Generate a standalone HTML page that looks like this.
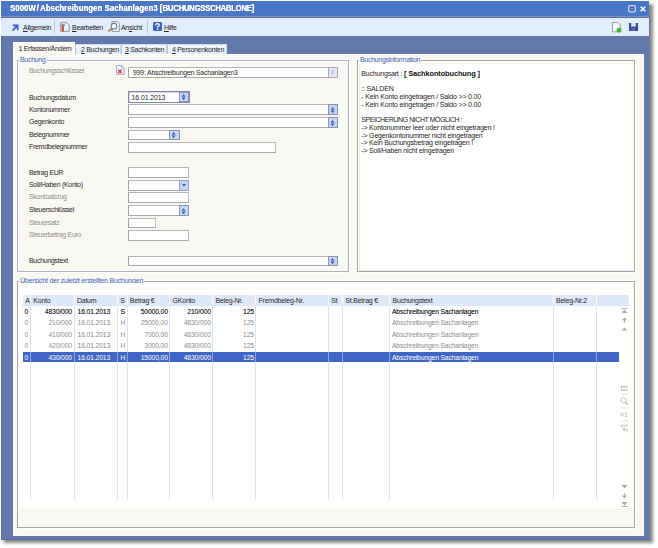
<!DOCTYPE html><html><head><meta charset="utf-8"><style>
*{margin:0;padding:0;box-sizing:border-box}
html,body{width:658px;height:548px;overflow:hidden;background:#fff;font-family:"Liberation Sans",sans-serif;color:#2a2a2a}
div{position:absolute}
.t{white-space:nowrap;font-size:7px;line-height:8px;letter-spacing:-0.3px}
.gb{border:1px solid #a9aeb8;box-shadow:1px 1px 0 #fff, inset 1px 1px 0 #fff}
.gl{font-size:7px;letter-spacing:-0.3px;line-height:8px;color:#4466bb;background:#f9f8f3;padding:0 1px 0 1px;white-space:nowrap}
.lbl{font-size:7px;letter-spacing:-0.3px;line-height:8px;color:#2a2a2a;white-space:nowrap;left:29px}
.dis{color:#8e8e8e}
.inp{background:#fff;border:1px solid #a6a6a8;border-top-color:#b6b6b8;border-right-color:#bdbdbf;border-bottom-color:#a9a9ab;left:128px}
.spin{top:0;right:0;width:10px;height:100%;background:#c7d7f7;border:1px solid #8d9cc2}
.hd{top:295px;height:10.5px;background:#dde8f8;border-right:1px solid #fff}
.ht{font-size:7px;letter-spacing:-0.22px;line-height:8px;color:#2a2a2a;white-space:nowrap}
.vl{top:305px;width:1px;height:195px;background:#dbe4f5}
</style></head><body>
<div style="left:4px;top:4px;width:649px;height:539px;background:#8a8a8a;filter:blur(1.6px)"></div>
<div style="left:1px;top:1px;width:648px;height:539px;background:#6379ab"></div>
<div style="left:649px;top:16px;width:1px;height:524px;background:#6f7aa4"></div>
<div style="left:1px;top:36px;width:1px;height:504px;background:#5c6d9b"></div>
<div style="left:12px;top:54px;width:1px;height:482px;background:#5f7299"></div>
<div style="left:1px;top:539px;width:648px;height:1px;background:#5c6d9b"></div>
<div style="left:1px;top:1px;width:648px;height:14.5px;background:#4a76c6"></div>
<div style="left:1px;top:15.5px;width:648px;height:1px;background:#7890c6"></div>
<div style="left:1px;top:16.5px;width:648px;height:1px;background:#5a70a2"></div>
<div class="t" style="left:9.5px;top:3.4px;font-size:8.7px;font-weight:bold;color:#fff;line-height:10px;letter-spacing:0.15px;transform:scaleX(0.881);transform-origin:0 0;text-shadow:0.25px 0 0 #fff">S000W<span style="margin:0 1.3px 0 1px">/</span>Abschreibungen Sachanlagen3 [<span style="letter-spacing:-0.25px">BUCHUNGSSCHABLONE</span>]</div>
<div style="left:1px;top:17.5px;width:648px;height:18.5px;background:#e1edfb"></div>
<div class="t" style="left:23px;top:23.7px;color:#222"><u>A</u>llgemein</div>
<div class="t" style="left:72px;top:23.7px;color:#222"><u>B</u>earbeiten</div>
<div class="t" style="left:121px;top:23.7px;color:#222">An<u>s</u>icht</div>
<div class="t" style="left:164px;top:23.7px;color:#222"><u>H</u>ilfe</div>
<div style="left:54px;top:20px;width:1px;height:13px;background:#b8c4d8"></div>
<div style="left:147px;top:20px;width:1px;height:13px;background:#b8c4d8"></div>
<svg style="position:absolute;left:10.8px;top:23.8px" width="8" height="8" viewBox="0 0 8 8"><path d="M1.6 6.6 L6 2.2" stroke="#4063b8" stroke-width="1.8" fill="none"/><path d="M1.8 1.4 H6.7 V6.3" stroke="#4063b8" stroke-width="1.6" fill="none"/><path d="M3 1.4 H6.7 V5 Z" fill="#4063b8"/></svg>
<svg style="position:absolute;left:59.5px;top:21.5px" width="10" height="10" viewBox="0 0 10 10"><path d="M0.7 0.7 H6.5 L9.2 3.4 V9.3 H0.7 Z" fill="#eef3fb" stroke="#7d8aa6" stroke-width="0.9"/><path d="M2.8 4 V9.5" stroke="#c8441c" stroke-width="2"/><path d="M1.5 3.5 Q3 2.3 5 3.3" stroke="#555" stroke-width="1.2" fill="none"/></svg>
<svg style="position:absolute;left:107px;top:20.5px" width="13" height="11" viewBox="0 0 13 11"><path d="M5 0.6 H10.5 L12.4 2.5 V10.4 H5 Z" fill="#eef3fb" stroke="#8894ac" stroke-width="0.9"/><circle cx="7" cy="5.2" r="2.8" fill="#fdfdff" stroke="#6e7c98" stroke-width="1.1"/><path d="M4.8 7.5 L1.3 10.2" stroke="#a8884c" stroke-width="1.8"/></svg>
<svg style="position:absolute;left:152.5px;top:22px" width="9" height="9" viewBox="0 0 9 9"><rect x="0" y="0" width="9" height="9" rx="1.2" fill="#3e66c0"/><path d="M2.8 3.2 Q2.8 1.6 4.5 1.6 Q6.3 1.6 6.3 3.1 Q6.3 4.1 4.6 4.8 V5.8" stroke="#fff" stroke-width="1.3" fill="none"/><rect x="3.9" y="6.6" width="1.4" height="1.3" fill="#fff"/></svg>
<svg style="position:absolute;left:612px;top:22px" width="10" height="11" viewBox="0 0 10 11"><path d="M0.5 0.5 H5.8 L8.3 3 V9.8 H0.5 Z" fill="#f4f6fa" stroke="#8a8e98" stroke-width="0.8"/><circle cx="7" cy="8.2" r="2.4" fill="#3fb83a"/></svg>
<svg style="position:absolute;left:629px;top:23px" width="9" height="8" viewBox="0 0 9 8"><rect x="0" y="0" width="9" height="8" fill="#3c4c9c"/><rect x="2.2" y="0" width="4.6" height="3.6" fill="#dde4f2"/><rect x="2.6" y="5" width="3.8" height="3" fill="#5868b0"/></svg>
<svg style="position:absolute;left:627.5px;top:5px" width="8" height="7.5" viewBox="0 0 8 7.5"><rect x="0.5" y="0.5" width="7" height="6.5" rx="1" fill="#87a0dc" stroke="#d6e0f6" stroke-width="0.9"/><path d="M2.3 2.3 H5.7 V5.2 H2.3 Z" fill="none" stroke="#31489a" stroke-width="0.9"/></svg>
<svg style="position:absolute;left:639.5px;top:5.5px" width="6" height="6" viewBox="0 0 6 6"><path d="M0.7 0.7 L5.3 5.3 M5.3 0.7 L0.7 5.3" stroke="#fff" stroke-width="1.5"/></svg>
<div style="left:13px;top:54px;width:631px;height:482px;background:#f9f8f3;border-top:1px solid #fff;border-left:1px solid #fff;border-right:1px solid #fff"></div>
<div style="left:75px;top:43.5px;width:46px;height:10.5px;background:linear-gradient(#f3f8fe,#e4edf9);border:1px solid #d0dae9;border-bottom:none;border-left-color:#b4c0d6"></div>
<div class="t" style="left:81px;top:45.5px"><u>2</u> Buchungen</div>
<div style="left:121px;top:43.5px;width:46px;height:10.5px;background:linear-gradient(#f3f8fe,#e4edf9);border:1px solid #d0dae9;border-bottom:none;border-left-color:#b4c0d6"></div>
<div class="t" style="left:125px;top:45.5px"><u>3</u> Sachkonten</div>
<div style="left:167px;top:43.5px;width:60px;height:10.5px;background:linear-gradient(#f3f8fe,#e4edf9);border:1px solid #d0dae9;border-bottom:none;border-left-color:#b4c0d6"></div>
<div class="t" style="left:172px;top:45.5px"><u>4</u> Personenkonten</div>
<div style="left:13px;top:42px;width:62px;height:13px;background:#f9f8f3;border:1px solid #fff;border-bottom:none"></div>
<div class="t" style="left:18.5px;top:45px">1 Erfassen/Ändern</div>
<div class="gb" style="left:17px;top:60px;width:332px;height:212px;border-color:#b0b2c4"></div>
<div class="gl" style="left:19px;top:55.5px">Buchung</div>
<div class="gb" style="left:357px;top:60px;width:278px;height:212px;background:#fff;border-color:#a2a8aa"></div>
<div style="left:359px;top:63px;width:274px;height:207.5px;border:1px solid #eeeeea;border-top-color:#f4f4f0;border-right-color:#f8f8f6"></div>
<div class="gl" style="left:359px;top:55.5px">Buchungsinformation</div>
<div class="gb" style="left:17px;top:281px;width:618px;height:247px;border-color:#a6a6a6"></div>
<div class="gl" style="left:19px;top:276.5px;letter-spacing:-0.2px">Übersicht der zuletzt erstellten Buchungen</div>
<div class="lbl dis" style="top:67.15px">Buchungsschlüssel</div>
<div class="lbl" style="top:93.75px">Buchungsdatum</div>
<div class="lbl" style="top:105.75px">Kontonummer</div>
<div class="lbl" style="top:118.35px">Gegenkonto</div>
<div class="lbl" style="top:130.75px">Belegnummer</div>
<div class="lbl" style="top:143.45px">Fremdbelegnummer</div>
<div class="lbl" style="top:168.95px">Betrag EUR</div>
<div class="lbl" style="top:181.35px">Soll/Haben (Konto)</div>
<div class="lbl dis" style="top:193.35px">Skontoabzug</div>
<div class="lbl" style="top:206.05px">Steuerschlüssel</div>
<div class="lbl dis" style="top:218.55px">Steuersatz</div>
<div class="lbl dis" style="top:231.05px">Steuerbetrag Euro</div>
<div class="lbl" style="top:256.55px">Buchungstext</div>
<div class="inp" style="top:66.5px;height:11.3px;width:210px"><div class="t" style="left:4px;top:1.6px;color:#262626;font-size:6.8px;letter-spacing:-0.14px">999: Abschreibungen Sachanlagen3</div></div>
<div style="left:327.5px;top:66.5px;width:10.5px;height:11.3px;background:#e3e9f7;border:1px solid #9ea6bc"></div>
<svg style="position:absolute;left:329.6px;top:69.35000000000001px" width="5.2" height="6.3" viewBox="0 0 5 7"><path d="M2.5 0 L5 3.5 L2.5 7 L0 3.5 Z" fill="#d0daf2"/><path d="M2.5 0.2 L4.4 2.7 H0.6 Z" fill="#b8c4e4"/><path d="M2.5 6.8 L4.4 4.3 H0.6 Z" fill="#b8c4e4"/></svg>
<svg style="position:absolute;left:116px;top:65.3px" width="9" height="10" viewBox="0 0 9 10"><path d="M0.6 0.6 H5.6 L8.2 3.2 V9.3 H0.6 Z" fill="#f2f5fb" stroke="#8ea0c8" stroke-width="0.9"/><path d="M5.6 0.6 V3.2 H8.2" fill="none" stroke="#a8b6d6" stroke-width="0.7"/><path d="M2.2 4.6 L5.6 8 M5.6 4.6 L2.2 8" stroke="#d82a2a" stroke-width="1.2"/></svg>
<div class="inp" style="top:91px;height:12px;width:62px;border-color:#8088a8;box-shadow:inset 0.5px 0.5px 0 #b0b8d0"><div class="t" style="left:2.6px;top:2px;color:#2a2a2a;font-size:6.9px;letter-spacing:-0.08px">16.01.2013</div></div>
<div style="left:178.5px;top:92px;width:10.5px;height:10px;background:#c5d5f6;border:1px solid #8a94b0"></div>
<svg style="position:absolute;left:180.6px;top:94.2px" width="5.2" height="6.3" viewBox="0 0 5 7"><path d="M2.5 0 L5 3.5 L2.5 7 L0 3.5 Z" fill="#8aa6e6"/><path d="M2.5 0.2 L4.4 2.7 H0.6 Z" fill="#3d5fb4"/><path d="M2.5 6.8 L4.4 4.3 H0.6 Z" fill="#3d5fb4"/></svg>
<div class="inp" style="top:104.3px;height:10.5px;width:210px"></div>
<div style="left:327.5px;top:104.3px;width:10.5px;height:10.5px;background:#c5d5f6;border:1px solid #8a94b0"></div>
<svg style="position:absolute;left:329.6px;top:106.75px" width="5.2" height="6.3" viewBox="0 0 5 7"><path d="M2.5 0 L5 3.5 L2.5 7 L0 3.5 Z" fill="#8aa6e6"/><path d="M2.5 0.2 L4.4 2.7 H0.6 Z" fill="#3d5fb4"/><path d="M2.5 6.8 L4.4 4.3 H0.6 Z" fill="#3d5fb4"/></svg>
<div class="inp" style="top:117px;height:10.7px;width:210px"></div>
<div style="left:327.5px;top:117px;width:10.5px;height:10.7px;background:#c5d5f6;border:1px solid #8a94b0"></div>
<svg style="position:absolute;left:329.6px;top:119.55px" width="5.2" height="6.3" viewBox="0 0 5 7"><path d="M2.5 0 L5 3.5 L2.5 7 L0 3.5 Z" fill="#8aa6e6"/><path d="M2.5 0.2 L4.4 2.7 H0.6 Z" fill="#3d5fb4"/><path d="M2.5 6.8 L4.4 4.3 H0.6 Z" fill="#3d5fb4"/></svg>
<div class="inp" style="top:129.5px;height:10.6px;width:51.5px"></div>
<div style="left:169.0px;top:129.5px;width:10.5px;height:10.6px;background:#c5d5f6;border:1px solid #8a94b0"></div>
<svg style="position:absolute;left:171.1px;top:132.0px" width="5.2" height="6.3" viewBox="0 0 5 7"><path d="M2.5 0 L5 3.5 L2.5 7 L0 3.5 Z" fill="#8aa6e6"/><path d="M2.5 0.2 L4.4 2.7 H0.6 Z" fill="#3d5fb4"/><path d="M2.5 6.8 L4.4 4.3 H0.6 Z" fill="#3d5fb4"/></svg>
<div class="inp" style="top:142.3px;height:10.6px;width:147.5px"></div>
<div class="inp" style="top:167.1px;height:10.7px;width:61px"></div>
<div class="inp" style="top:180px;height:10.6px;width:61px"></div>
<div style="left:178.5px;top:180px;width:10.5px;height:10.6px;background:#c5d5f6;border:1px solid #94a2c8"></div>
<svg style="position:absolute;left:181.5px;top:183.8px" width="4" height="3" viewBox="0 0 4 3"><path d="M0 0 H4 L2 2.5 Z" fill="#3a56a8"/></svg>
<div class="inp" style="top:192.4px;height:10.7px;width:61px"></div>
<div class="inp" style="top:205.2px;height:10.4px;width:61px"></div>
<div style="left:178.5px;top:205.2px;width:10.5px;height:10.4px;background:#c5d5f6;border:1px solid #8a94b0"></div>
<svg style="position:absolute;left:180.6px;top:207.59999999999997px" width="5.2" height="6.3" viewBox="0 0 5 7"><path d="M2.5 0 L5 3.5 L2.5 7 L0 3.5 Z" fill="#8aa6e6"/><path d="M2.5 0.2 L4.4 2.7 H0.6 Z" fill="#3d5fb4"/><path d="M2.5 6.8 L4.4 4.3 H0.6 Z" fill="#3d5fb4"/></svg>
<div class="inp" style="top:217.5px;height:10.9px;width:27.599999999999994px"></div>
<div class="inp" style="top:230px;height:10.5px;width:61px"></div>
<div class="inp" style="top:255.7px;height:10.3px;width:210px"></div>
<div style="left:327.5px;top:255.7px;width:10.5px;height:10.3px;background:#c5d5f6;border:1px solid #8a94b0"></div>
<svg style="position:absolute;left:329.6px;top:258.04999999999995px" width="5.2" height="6.3" viewBox="0 0 5 7"><path d="M2.5 0 L5 3.5 L2.5 7 L0 3.5 Z" fill="#8aa6e6"/><path d="M2.5 0.2 L4.4 2.7 H0.6 Z" fill="#3d5fb4"/><path d="M2.5 6.8 L4.4 4.3 H0.6 Z" fill="#3d5fb4"/></svg>
<div class="t" style="left:361.3px;top:69.55px;color:#262626;letter-spacing:-0.18px">Buchungsart : <b style="color:#111;font-size:7.4px;letter-spacing:-0.1px">[ Sachkontobuchung ]</b></div>
<div class="t" style="left:361.3px;top:84.95px;color:#262626;letter-spacing:-0.18px">:: SALDEN</div>
<div class="t" style="left:361.3px;top:92.75px;color:#262626;letter-spacing:-0.18px">- Kein Konto eingetragen / Saldo &gt;&gt; 0.00</div>
<div class="t" style="left:361.3px;top:100.55px;color:#262626;letter-spacing:-0.18px">- Kein Konto eingetragen / Saldo &gt;&gt; 0.00</div>
<div class="t" style="left:361.3px;top:115.85px;color:#262626;letter-spacing:-0.18px"><span style="letter-spacing:-0.45px">SPEICHERUNG NICHT MÖGLICH :</span></div>
<div class="t" style="left:361.3px;top:123.75px;color:#262626;letter-spacing:-0.18px">-&gt; Kontonummer leer oder nicht eingetragen !</div>
<div class="t" style="left:361.3px;top:131.55px;color:#262626;letter-spacing:-0.18px">-&gt; Gegenkontonummer nicht eingetragen</div>
<div class="t" style="left:361.3px;top:139.35px;color:#262626;letter-spacing:-0.18px">-&gt; Kein Buchungsbetrag eingetragen !</div>
<div class="t" style="left:361.3px;top:147.15px;color:#262626;letter-spacing:-0.18px">-&gt; Soll/Haben nicht eingetragen</div>
<div style="left:18px;top:283px;width:616px;height:225px;background:#fdfdfb"></div>
<div style="left:23px;top:295px;width:611px;height:213px;background:#fff"></div>
<div class="hd" style="left:23px;width:8px"></div>
<div class="ht" style="left:25.3px;top:296.65px">A</div>
<div class="hd" style="left:31px;width:43.599999999999994px"></div>
<div class="ht" style="left:33.3px;top:296.65px">Konto</div>
<div class="hd" style="left:74.6px;width:43.400000000000006px"></div>
<div class="ht" style="left:76.89999999999999px;top:296.65px">Datum</div>
<div class="hd" style="left:118px;width:9.5px"></div>
<div class="ht" style="left:120.3px;top:296.65px">S</div>
<div class="hd" style="left:127.5px;width:42.80000000000001px"></div>
<div class="ht" style="left:129.8px;top:296.65px">Betrag €</div>
<div class="hd" style="left:170.3px;width:43.0px"></div>
<div class="ht" style="left:172.60000000000002px;top:296.65px">GKonto</div>
<div class="hd" style="left:213.3px;width:42.89999999999998px"></div>
<div class="ht" style="left:215.60000000000002px;top:296.65px">Beleg-Nr.</div>
<div class="hd" style="left:256.2px;width:72.80000000000001px"></div>
<div class="ht" style="left:258.5px;top:296.65px">Fremdbeleg-Nr.</div>
<div class="hd" style="left:329px;width:14px"></div>
<div class="ht" style="left:331.3px;top:296.65px">St</div>
<div class="hd" style="left:343px;width:47.30000000000001px"></div>
<div class="ht" style="left:345.3px;top:296.65px">St.Betrag €</div>
<div class="hd" style="left:390.3px;width:163.40000000000003px"></div>
<div class="ht" style="left:392.6px;top:296.65px">Buchungstext</div>
<div class="hd" style="left:553.7px;width:43.299999999999955px"></div>
<div class="ht" style="left:556.0px;top:296.65px">Beleg-Nr.2</div>
<div class="hd" style="left:597px;width:33px"></div>
<div class="vl" style="left:30px"></div>
<div class="vl" style="left:73.6px"></div>
<div class="vl" style="left:117px"></div>
<div class="vl" style="left:126.5px"></div>
<div class="vl" style="left:169.3px"></div>
<div class="vl" style="left:212.3px"></div>
<div class="vl" style="left:255.2px"></div>
<div class="vl" style="left:328px"></div>
<div class="vl" style="left:342px"></div>
<div class="vl" style="left:389.3px"></div>
<div class="vl" style="left:552.7px"></div>
<div class="vl" style="left:596px"></div>
<div style="left:23px;top:352.2px;width:596.3px;height:10.3px;background:#3f66c6"></div>
<div style="left:30px;top:352.2px;width:1px;height:10.3px;background:#86a4e4"></div>
<div style="left:73.6px;top:352.2px;width:1px;height:10.3px;background:#86a4e4"></div>
<div style="left:117px;top:352.2px;width:1px;height:10.3px;background:#86a4e4"></div>
<div style="left:126.5px;top:352.2px;width:1px;height:10.3px;background:#86a4e4"></div>
<div style="left:169.3px;top:352.2px;width:1px;height:10.3px;background:#86a4e4"></div>
<div style="left:212.3px;top:352.2px;width:1px;height:10.3px;background:#86a4e4"></div>
<div style="left:255.2px;top:352.2px;width:1px;height:10.3px;background:#86a4e4"></div>
<div style="left:328px;top:352.2px;width:1px;height:10.3px;background:#86a4e4"></div>
<div style="left:342px;top:352.2px;width:1px;height:10.3px;background:#86a4e4"></div>
<div style="left:389.3px;top:352.2px;width:1px;height:10.3px;background:#86a4e4"></div>
<div style="left:552.7px;top:352.2px;width:1px;height:10.3px;background:#86a4e4"></div>
<div style="left:596px;top:352.2px;width:1px;height:10.3px;background:#86a4e4"></div>
<div class="t" style="left:24.5px;top:308.05px;font-size:6.8px;letter-spacing:-0.15px;color:#111;text-shadow:0.15px 0 0 rgba(0,0,0,.35)">0</div>
<div class="t" style="right:586px;top:308.05px;font-size:6.8px;letter-spacing:-0.15px;color:#111;text-shadow:0.15px 0 0 rgba(0,0,0,.35)">4830/000</div>
<div class="t" style="left:77.5px;top:308.05px;font-size:6.8px;letter-spacing:-0.15px;color:#111;text-shadow:0.15px 0 0 rgba(0,0,0,.35)">16.01.2013</div>
<div class="t" style="left:120.5px;top:308.05px;font-size:6.8px;letter-spacing:-0.15px;color:#111;text-shadow:0.15px 0 0 rgba(0,0,0,.35)">S</div>
<div class="t" style="right:490.2px;top:308.05px;font-size:6.8px;letter-spacing:-0.15px;color:#111;text-shadow:0.15px 0 0 rgba(0,0,0,.35)">50000,00</div>
<div class="t" style="right:447.2px;top:308.05px;font-size:6.8px;letter-spacing:-0.15px;color:#111;text-shadow:0.15px 0 0 rgba(0,0,0,.35)">210/000</div>
<div class="t" style="right:404px;top:308.05px;font-size:6.8px;letter-spacing:-0.15px;color:#111;text-shadow:0.15px 0 0 rgba(0,0,0,.35)">125</div>
<div class="t" style="left:392px;top:308.05px;font-size:6.8px;letter-spacing:-0.15px;color:#111;text-shadow:0.15px 0 0 rgba(0,0,0,.35)"><span style="letter-spacing:-0.17px">Abschreibungen Sachanlagen</span></div>
<div class="t" style="left:24.5px;top:319.43px;font-size:6.8px;letter-spacing:-0.15px;color:#8e8e8e">0</div>
<div class="t" style="right:586px;top:319.43px;font-size:6.8px;letter-spacing:-0.15px;color:#8e8e8e">210/000</div>
<div class="t" style="left:77.5px;top:319.43px;font-size:6.8px;letter-spacing:-0.15px;color:#8e8e8e">16.01.2013</div>
<div class="t" style="left:120.5px;top:319.43px;font-size:6.8px;letter-spacing:-0.15px;color:#8e8e8e">H</div>
<div class="t" style="right:490.2px;top:319.43px;font-size:6.8px;letter-spacing:-0.15px;color:#8e8e8e">25000,00</div>
<div class="t" style="right:447.2px;top:319.43px;font-size:6.8px;letter-spacing:-0.15px;color:#8e8e8e">4830/000</div>
<div class="t" style="right:404px;top:319.43px;font-size:6.8px;letter-spacing:-0.15px;color:#8e8e8e">125</div>
<div class="t" style="left:392px;top:319.43px;font-size:6.8px;letter-spacing:-0.15px;color:#8e8e8e"><span style="letter-spacing:-0.17px">Abschreibungen Sachanlagen</span></div>
<div class="t" style="left:24.5px;top:330.81px;font-size:6.8px;letter-spacing:-0.15px;color:#8e8e8e">0</div>
<div class="t" style="right:586px;top:330.81px;font-size:6.8px;letter-spacing:-0.15px;color:#8e8e8e">410/000</div>
<div class="t" style="left:77.5px;top:330.81px;font-size:6.8px;letter-spacing:-0.15px;color:#8e8e8e">16.01.2013</div>
<div class="t" style="left:120.5px;top:330.81px;font-size:6.8px;letter-spacing:-0.15px;color:#8e8e8e">H</div>
<div class="t" style="right:490.2px;top:330.81px;font-size:6.8px;letter-spacing:-0.15px;color:#8e8e8e">7000,00</div>
<div class="t" style="right:447.2px;top:330.81px;font-size:6.8px;letter-spacing:-0.15px;color:#8e8e8e">4830/000</div>
<div class="t" style="right:404px;top:330.81px;font-size:6.8px;letter-spacing:-0.15px;color:#8e8e8e">125</div>
<div class="t" style="left:392px;top:330.81px;font-size:6.8px;letter-spacing:-0.15px;color:#8e8e8e"><span style="letter-spacing:-0.17px">Abschreibungen Sachanlagen</span></div>
<div class="t" style="left:24.5px;top:342.19px;font-size:6.8px;letter-spacing:-0.15px;color:#8e8e8e">0</div>
<div class="t" style="right:586px;top:342.19px;font-size:6.8px;letter-spacing:-0.15px;color:#8e8e8e">420/000</div>
<div class="t" style="left:77.5px;top:342.19px;font-size:6.8px;letter-spacing:-0.15px;color:#8e8e8e">16.01.2013</div>
<div class="t" style="left:120.5px;top:342.19px;font-size:6.8px;letter-spacing:-0.15px;color:#8e8e8e">H</div>
<div class="t" style="right:490.2px;top:342.19px;font-size:6.8px;letter-spacing:-0.15px;color:#8e8e8e">3000,00</div>
<div class="t" style="right:447.2px;top:342.19px;font-size:6.8px;letter-spacing:-0.15px;color:#8e8e8e">4830/000</div>
<div class="t" style="right:404px;top:342.19px;font-size:6.8px;letter-spacing:-0.15px;color:#8e8e8e">125</div>
<div class="t" style="left:392px;top:342.19px;font-size:6.8px;letter-spacing:-0.15px;color:#8e8e8e"><span style="letter-spacing:-0.17px">Abschreibungen Sachanlagen</span></div>
<div class="t" style="left:24.5px;top:353.57px;font-size:6.8px;letter-spacing:-0.15px;color:#fff">0</div>
<div class="t" style="right:586px;top:353.57px;font-size:6.8px;letter-spacing:-0.15px;color:#fff">430/000</div>
<div class="t" style="left:77.5px;top:353.57px;font-size:6.8px;letter-spacing:-0.15px;color:#fff">16.01.2013</div>
<div class="t" style="left:120.5px;top:353.57px;font-size:6.8px;letter-spacing:-0.15px;color:#fff">H</div>
<div class="t" style="right:490.2px;top:353.57px;font-size:6.8px;letter-spacing:-0.15px;color:#fff">15000,00</div>
<div class="t" style="right:447.2px;top:353.57px;font-size:6.8px;letter-spacing:-0.15px;color:#fff">4830/000</div>
<div class="t" style="right:404px;top:353.57px;font-size:6.8px;letter-spacing:-0.15px;color:#fff">125</div>
<div class="t" style="left:392px;top:353.57px;font-size:6.8px;letter-spacing:-0.15px;color:#fff"><span style="letter-spacing:-0.17px">Abschreibungen Sachanlagen</span></div>
<svg style="position:absolute;left:620px;top:306px" width="9" height="30" viewBox="0 0 9 30"><g fill="#ababab"><rect x="1.5" y="2" width="6" height="0.9"/><path d="M4.5 3.5 L7.5 7 H1.5 Z"/><path d="M4.5 11.6 L7.2 14.3 H1.8 Z"/><rect x="3.9" y="14" width="1.2" height="2.6"/><path d="M4.5 21.5 L7.5 24.5 H1.5 Z"/></g></svg>
<svg style="position:absolute;left:619px;top:384px" width="11" height="50" viewBox="0 0 11 50"><g fill="none" stroke="#acacac" stroke-width="0.7"><rect x="2.3" y="2.3" width="5.6" height="4"/><path d="M5.1 2.3 V6.3"/><path d="M2 10.2 H9" stroke="#d2d2d2"/><circle cx="4.6" cy="16.3" r="2.6"/><path d="M6.6 18.3 L8.8 20.6" stroke-width="1.1"/><path d="M2 24 H9" stroke="#d2d2d2"/><path d="M2.2 29 V32.5 M4 29 V32.5 M6 29 L8 29 M6 32.5 H8 M6 30.7 H8" /><path d="M2 37 H9" stroke="#d2d2d2"/><path d="M1.5 41.3 H8.5 L5.5 44.2 V47 L4.3 46.3 V44.2 Z"/><path d="M6.8 45.5 H9 M6.8 47 H9"/></g></svg>
<svg style="position:absolute;left:620px;top:483px" width="9" height="26" viewBox="0 0 9 26"><g fill="#ababab"><path d="M1.5 2 H7.5 L4.5 5.5 Z"/><path d="M4.5 15.2 L7.2 12.5 H1.8 Z"/><rect x="3.9" y="10" width="1.2" height="2.6"/><path d="M1.5 19 H7.5 L4.5 22.5 Z"/><rect x="1.5" y="23" width="6" height="0.9"/></g></svg>
</body></html>
